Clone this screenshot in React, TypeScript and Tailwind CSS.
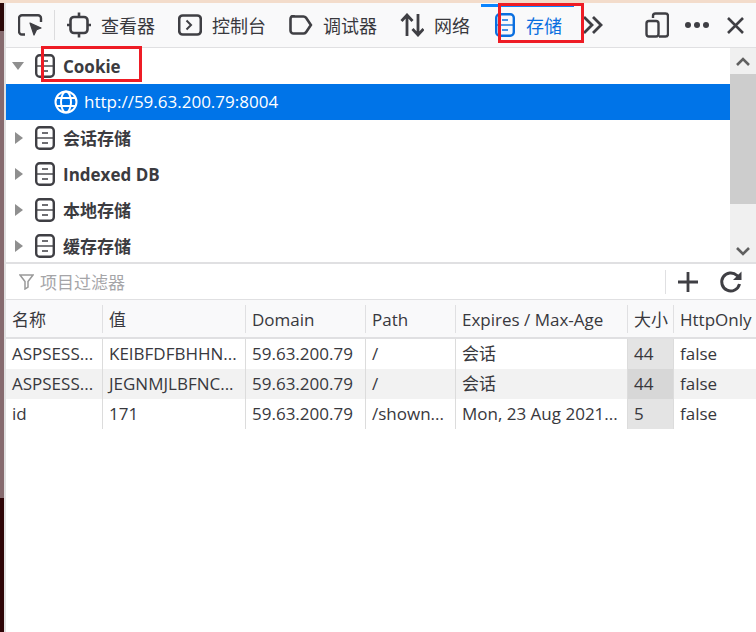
import React from "react";

const Store = ({ c = "#3f3f44" }: { c?: string }) => (
  <svg width={20} height={24} viewBox="0 0 20 24" fill="none" stroke={c} strokeWidth="2.4">
    <rect x="1.200" y="1.200" width="17.600" height="21.600" rx="3.500" />
    <path d="M1 12h18" strokeWidth="1.400" />
    <path d="M7 7h6M7 17h6" strokeWidth="1.500" />
  </svg>
);

const Tab = ({ icon, label, active, w }: { icon: React.ReactNode; label: string; active?: boolean; w: string }) => (
  <div className={`flex items-center h-full ${w} ${active ? "gap-[11px] text-[#0a6fe0]" : "gap-[10px] text-[#38383d]"}`}>
    {icon}
    <span className="text-[18px] leading-none pt-[2px]">{label}</span>
  </div>
);

const TreeRow = ({ label, open }: { label: string; open?: boolean }) => (
  <div className="h-[36px] flex items-center">
    <div className="w-[29px] flex justify-center">
      {open ? (
        <div className="w-0 h-0 border-x-[6px] border-x-transparent border-t-[8px] border-t-[#8f8f8f] -ml-[5px]" />
      ) : (
        <div className="w-0 h-0 border-y-[6px] border-y-transparent border-l-[8px] border-l-[#8f8f8f] -ml-[3px]" />
      )}
    </div>
    <Store />
    <span className="ml-[8px] text-[17px] font-bold text-[#3b3b40] pt-[2px]">{label}</span>
  </div>
);

const cols = ["w-[97px]", "w-[143px]", "w-[120px]", "w-[90px]", "w-[172px]", "w-[46px]", "flex-1"];
const header = ["名称", "值", "Domain", "Path", "Expires / Max-Age", "大小", "HttpOnly"];
const rows = [
  ["ASPSESS...", "KEIBFDFBHHN...", "59.63.200.79", "/", "会话", "44", "false"],
  ["ASPSESS...", "JEGNMJLBFNC...", "59.63.200.79", "/", "会话", "44", "false"],
  ["id", "171", "59.63.200.79", "/shown...", "Mon, 23 Aug 2021...", "5", "false"],
];

export default function App() {
  return (
    <div
      className="relative w-[756px] h-[632px] overflow-hidden bg-white flex flex-col text-[#38383d]"
      style={{ fontFamily: '"Open Sans","Noto Sans CJK SC",sans-serif' }}
    >
      <div className="h-[3px] bg-[#f3dccb] shrink-0" />
      <div className="flex flex-1 min-h-0">
        <div className="w-[4px] flex flex-col shrink-0">
          <div className="h-[28px] bg-[#2b0808]" />
          <div className="h-[467px] bg-[#866a6e]" />
          <div className="flex-1 bg-[#2e0406]" />
        </div>
        <div className="w-[2px] bg-[#e0e0e0] shrink-0" />
        <div className="flex-1 min-w-0 flex flex-col">
          {/* Toolbar */}
          <div className="h-[45px] bg-[#f9f9fa] border-b border-[#e0e0e2] flex items-center shrink-0">
            <div className="w-[48px] flex items-center pl-[12px] h-full">
              <svg width="25" height="22" viewBox="0 0 25 22" fill="none" stroke="#3f3f44" strokeWidth="2.400">
                <path d="M7 20.500H4a3 3 0 0 1-3-3V4.200a3 3 0 0 1 3-3h16a3 3 0 0 1 3 3V8" />
                <path d="M12 9l11 5-4.500 1.800L16 21z" fill="#3f3f44" strokeWidth="1.200" strokeLinejoin="round" />
              </svg>
            </div>
            <div className="w-px h-[30px] bg-[#dcdcde]" />
            <div className="w-[12px]" />
            <Tab
              w="w-[111px]"
              label="查看器"
              icon={
                <svg width="24" height="26" viewBox="0 0 24 26" fill="none" stroke="#3f3f44" strokeWidth="2.600">
                  <rect x="3.500" y="5" width="17" height="16" rx="3.500" />
                  <path d="M12 0.500V5M12 21v4.500M0 13h3.500M20.500 13H24" />
                </svg>
              }
            />
            <Tab
              w="w-[111px]"
              label="控制台"
              icon={
                <svg width="24" height="22" viewBox="0 0 24 22" fill="none" stroke="#3f3f44" strokeWidth="2.600">
                  <rect x="1.200" y="1.500" width="21.600" height="19" rx="3.500" />
                  <path d="M8.500 6.500l4.500 4.500-4.500 4.500" strokeWidth="2" />
                </svg>
              }
            />
            <Tab
              w="w-[111px]"
              label="调试器"
              icon={
                <svg width="24" height="20" viewBox="0 0 24 20" fill="none" stroke="#3f3f44" strokeWidth="2.600">
                  <path d="M4.500 1.500h10c1 0 1.800.4 2.400 1.100l5 7.400-5 7.400c-.6.7-1.400 1.100-2.400 1.100h-10a3 3 0 0 1-3-3v-11.600a3 3 0 0 1 3-3z" />
                </svg>
              }
            />
            <Tab
              w="w-[95px]"
              label="网络"
              icon={
                <svg width="24" height="24" viewBox="0 0 24 24" fill="none" stroke="#3f3f44" strokeWidth="2.800">
                  <path d="M7 23V2M1.500 8L7 2l5.500 6M18 1v21M12.500 16l5.500 6 5.500-6" />
                </svg>
              }
            />
            <Tab w="w-[88px]" active label="存储" icon={<Store c="#0a6fe0" />} />
            <svg width="22" height="20" viewBox="0 0 22 20" fill="none" stroke="#3f3f44" strokeWidth="2.800">
              <path d="M1 2l8 8-8 8M10 2l8 8-8 8" />
            </svg>
            <div className="w-[40px]" />
            <svg width="24" height="26" viewBox="0 0 24 26" fill="none" stroke="#3f3f44" strokeWidth="2.400">
              <path d="M8 6V4a2.500 2.500 0 0 1 2.500-2.500h10A2.500 2.500 0 0 1 23 4v18a2.500 2.500 0 0 1-2.500 2.500H14" />
              <rect x="1.500" y="9" width="12" height="15.500" rx="2.500" />
            </svg>
            <div className="w-[16px]" />
            <div className="flex gap-[3px]">
              <div className="w-[6px] h-[6px] rounded-full bg-[#3f3f44]" />
              <div className="w-[6px] h-[6px] rounded-full bg-[#3f3f44]" />
              <div className="w-[6px] h-[6px] rounded-full bg-[#3f3f44]" />
            </div>
            <div className="w-[18px]" />
            <svg width="17" height="17" viewBox="0 0 17 17" fill="none" stroke="#3f3f44" strokeWidth="2.600">
              <path d="M1 1l15 15M16 1L1 16" />
            </svg>
          </div>

          {/* Tree */}
          <div className="h-[214px] flex shrink-0">
            <div className="flex-1 min-w-0">
              <TreeRow label="Cookie" open />
              <div className="h-[36px] bg-[#0074e8] flex items-center pl-[48px] text-white">
                <svg width="24" height="24" viewBox="0 0 24 24" fill="none" stroke="#fff" strokeWidth="2">
                  <circle cx="12" cy="12" r="10.500" />
                  <ellipse cx="12" cy="12" rx="5" ry="10.500" />
                  <path d="M2.500 8h19M2.500 16h19" />
                </svg>
                <span className="ml-[6px] text-[17px]">http://59.63.200.79:8004</span>
              </div>
              <TreeRow label="会话存储" />
              <TreeRow label="Indexed DB" />
              <TreeRow label="本地存储" />
              <TreeRow label="缓存存储" />
            </div>
            <div className="w-[26px] bg-[#f0f0f0] flex flex-col shrink-0">
              <div className="h-[26px] flex items-center justify-center">
                <svg width="14" height="9" viewBox="0 0 14 9" fill="none" stroke="#606060" strokeWidth="2.600">
                  <path d="M1 8l6-6 6 6" />
                </svg>
              </div>
              <div className="h-[130px] bg-[#cdcdcd]" />
              <div className="flex-1" />
              <div className="h-[22px] flex items-center justify-center">
                <svg width="14" height="9" viewBox="0 0 14 9" fill="none" stroke="#606060" strokeWidth="2.600">
                  <path d="M1 1l6 6 6-6" />
                </svg>
              </div>
            </div>
          </div>

          {/* Filter */}
          <div className="h-[38px] border-t-2 border-b border-[#e0e0e2] flex items-center shrink-0 bg-white">
            <svg width="15" height="17" viewBox="0 0 15 17" fill="none" stroke="#9a9a9a" strokeWidth="1.500" className="ml-[13px]">
              <path d="M1 2h13L9 8.500V14l-3 2V8.500z" />
            </svg>
            <span className="ml-[6px] text-[17px] text-[#a5a5a8] flex-1 pt-[2px]">项目过滤器</span>
            <div className="w-px h-[24px] bg-[#e0e0e2] ml-px" />
            <svg width="22" height="22" viewBox="0 0 22 22" fill="none" stroke="#3f3f44" strokeWidth="2.800" className="ml-[11px]">
              <path d="M11 1v20M1 11h20" />
            </svg>
            <svg width="24" height="24" viewBox="0 0 24 24" fill="none" stroke="#3f3f44" strokeWidth="3" className="ml-[20px] mr-[13px]">
              <path d="M20.500 14a9 9 0 1 1-2.500-8.500L21 8" />
              <path d="M22.500 1.500V10h-8.500z" fill="#3f3f44" strokeWidth="0" />
            </svg>
          </div>

          {/* Table */}
          <div className="h-[39px] bg-[#f9f9fa] border-b-2 border-[#e0e0e2] flex items-center shrink-0">
            {header.map((h, i) => (
              <div
                key={h}
                className={`${cols[i]} h-[28px] flex items-center pl-[6px] whitespace-nowrap text-[17px] pt-[2px] ${i < 6 ? "border-r border-[#e0e0e2]" : ""}`}
              >
                {h}
              </div>
            ))}
          </div>
          {rows.map((r, ri) => (
            <div key={ri} className={`h-[30px] flex shrink-0 ${ri === 1 ? "bg-[#f2f2f2]" : ""}`}>
              {r.map((c, i) => (
                <div
                  key={i}
                  className={`${cols[i]} flex items-center pl-[6px] whitespace-nowrap overflow-hidden text-[17px] ${i < 6 ? "border-r border-[#dcdcdc]" : ""} ${i === 5 ? (ri === 1 ? "bg-[#d7d7d7] border-[#bdbdbd]" : "bg-[#e4e4e4] border-[#bdbdbd]") : ""}`}
                >
                  {c}
                </div>
              ))}
            </div>
          ))}
        </div>
      </div>

      {/* Overlays: selected tab marker and annotation boxes */}
      <div className="absolute left-[481px] top-[4px] w-[93px] h-[3px] bg-[#0a84ff]" />
      <div className="absolute left-[41px] top-[46px] w-[101px] h-[36px] border-[3px] border-[#ee1c25]" />
      <div className="absolute left-[498px] top-[3px] w-[86px] h-[40px] border-[3px] border-[#ee1c25]" />
    </div>
  );
}
